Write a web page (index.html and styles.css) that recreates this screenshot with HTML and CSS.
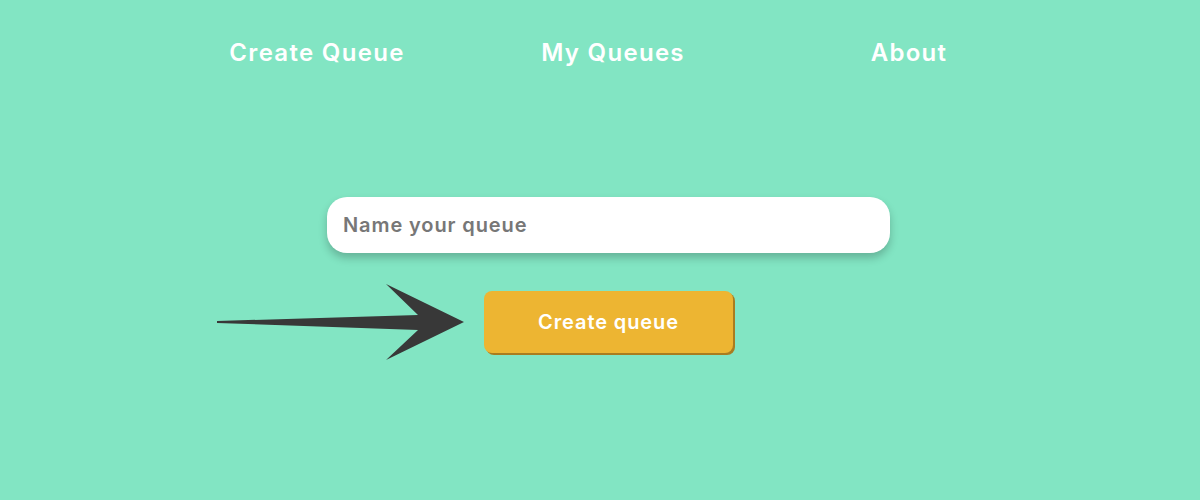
FILE: index.html
```html
<!DOCTYPE html>
<html lang="en">
<head>
<meta charset="utf-8">
<title>Create Queue</title>
<link rel="stylesheet" href="styles.css">
</head>
<body>
<nav class="nav">
  <a class="nav-link" href="#">Create Queue</a>
  <a class="nav-link" href="#">My Queues</a>
  <a class="nav-link" href="#">About</a>
</nav>
<main class="main">
  <div class="field-row">
    <input class="name-input" type="text" placeholder="Name your queue">
  </div>
  <div class="action-row">
    <svg class="arrow" width="252" height="84" viewBox="0 0 252 84" aria-hidden="true">
      <polygon points="2,41 203,35 171,4 249,42 171,80 203,50 2,43" fill="#383838"/>
    </svg>
    <button class="create-btn" type="button">Create queue</button>
  </div>
</main>
</body>
</html>
```
FILE: styles.css
```css
* { box-sizing: border-box; }
html, body {
  margin: 0;
  padding: 0;
}
body {
  width: 1200px;
  height: 500px;
  background: #82e5c3;
  font-family: Inter, "Open Sans", sans-serif;
  overflow: hidden;
}
.nav {
  display: grid;
  grid-template-columns: repeat(3, 296px);
  margin-left: 169px;
  padding-top: 37px;
}
.nav-link {
  justify-self: center;
  color: #ffffff;
  text-decoration: none;
  font-size: 24px;
  font-weight: 600;
  letter-spacing: 1.3px;
  line-height: 32px;
}
.main {
  padding-top: 128px;
}
.field-row {
  padding-left: 327px;
}
.name-input {
  display: block;
  width: 563px;
  height: 56px;
  border: none;
  outline: none;
  border-radius: 20px;
  background: #ffffff;
  padding: 0 16px;
  font-family: inherit;
  font-size: 20px;
  font-weight: 600;
  letter-spacing: 0.9px;
  color: #444;
  box-shadow: 0 5px 8px rgba(0, 0, 0, 0.22);
}
.name-input::placeholder {
  color: #777777;
}
.action-row {
  display: flex;
  align-items: center;
  padding-left: 215px;
  margin-top: 27px;
}
.arrow {
  display: block;
  flex: none;
}
.create-btn {
  margin-left: 17px;
  width: 249px;
  height: 62px;
  border: none;
  border-radius: 8px;
  background: #edb532;
  color: #ffffff;
  font-family: inherit;
  font-size: 20px;
  font-weight: 600;
  letter-spacing: 0.9px;
  box-shadow: 2px 2px 0 #a97c1f;
  cursor: pointer;
}
```
